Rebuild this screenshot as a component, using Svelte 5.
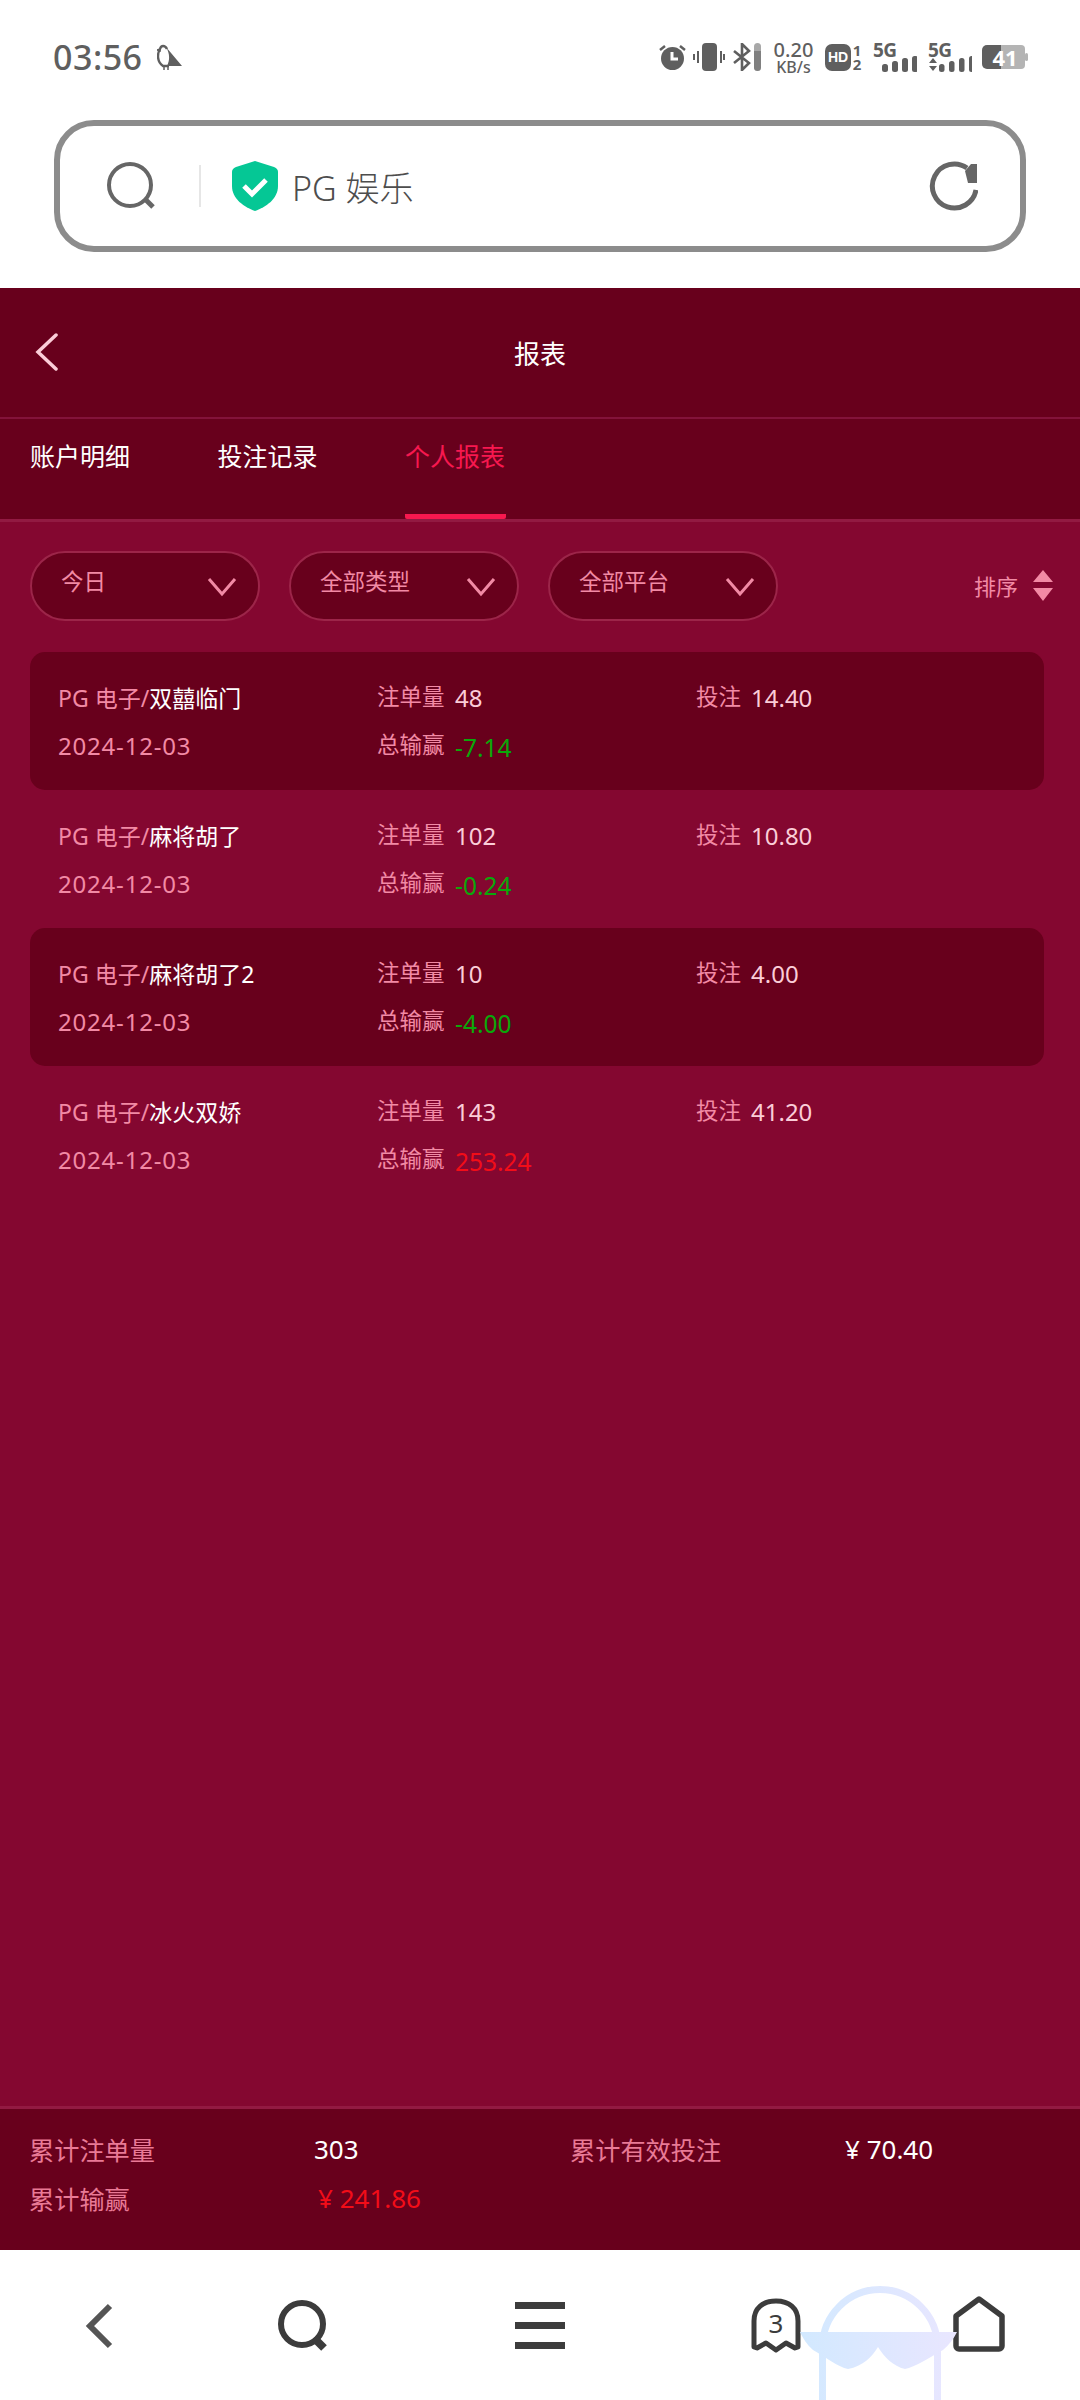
<script>
	let rows = [
		{ name: "双囍临门", count: "48", bet: "14.40", win: "-7.14", up: false },
		{ name: "麻将胡了", count: "102", bet: "10.80", win: "-0.24", up: false },
		{ name: "麻将胡了2", count: "10", bet: "4.00", win: "-4.00", up: false },
		{ name: "冰火双娇", count: "143", bet: "41.20", win: "253.24", up: true },
	]
	let tabs = ["账户明细", "投注记录", "个人报表"]
	let filters = ["今日", "全部类型", "全部平台"]
	let bars = [[0, 8], [10, 11], [20, 14], [30, 16]]
</script>

<div class="page">
	<div class="status">
		<span class="time">03:56</span>
		<svg class="bird" width="25" height="27" viewBox="0 0 25 27">
			<path d="M10 5C8 1 4 1 3 5 0 10 0 18 6 22h6" fill="none" stroke="#5f5f5f" stroke-width="2.4"/>
			<path d="M9 3l16 19H10c3-6 3-12-1-19z" fill="#5f5f5f"/>
			<path d="M3 5L0 6l3 1zM7 22v4M11 22v4" stroke="#5f5f5f" stroke-width="1.5" fill="#5f5f5f"/>
		</svg>
		<div class="status-right">
			<svg class="s-alarm" width="27" height="26" viewBox="0 0 27 26">
				<circle cx="13.5" cy="14.5" r="11.5" fill="#5f5f5f"/>
				<path d="M13 8v7h6" fill="none" stroke="#fff" stroke-width="3"/>
				<path d="M1 6l5-4M26 6l-5-4" stroke="#5f5f5f" stroke-width="2.5"/>
			</svg>
			<svg class="s-vib" width="32" height="28" viewBox="0 0 32 28">
				<rect x="9" y="0" width="15" height="28" rx="4" fill="#5f5f5f"/>
				<path d="M5 8v12M1 11v6M28 8v12M31 11v6" stroke="#5f5f5f" stroke-width="2"/>
			</svg>
			<svg class="s-bt" width="29" height="28" viewBox="0 0 29 28">
				<path d="M1 8l15 12-7 7V1l7 7L1 20" fill="none" stroke="#5f5f5f" stroke-width="2.6"/>
				<rect x="21" y="0" width="7" height="28" rx="3.5" fill="#a8a8a8"/>
				<path d="M21 8h7v16.5a3.5 3.5 0 0 1-7 0z" fill="#5f5f5f" opacity=".55"/>
			</svg>
			<div class="speed"><span>0.20</span><span class="kb">KB/s</span></div>
			<div class="hd">
				<span class="hd-box">HD</span>
				<span class="hd-n"><span>1</span><span>2</span></span>
			</div>
			<div class="net">
				<span>5G</span>
				<svg width="44" height="30" viewBox="0 0 44 30">
					{#each bars as b}
						<rect x={b[0] + 9} y={30 - b[1]} width="6" height={b[1]} rx="2.5" fill="#5f5f5f"/>
					{/each}
				</svg>
			</div>
			<div class="net">
				<span>5G</span>
				<svg width="44" height="30" viewBox="0 0 44 30">
					<path d="M1 21l4-5 4 5zM1 24h8l-4 5z" fill="#5f5f5f"/>
					{#each bars as b}
						<rect x={b[0] + 11} y={30 - b[1]} width="5.5" height={b[1]} rx="2.5" fill="#5f5f5f"/>
					{/each}
				</svg>
			</div>
			<div class="batt">
				<svg width="47" height="26" viewBox="0 0 47 26">
					<path d="M6 1h14v24H6a5 5 0 0 1-5-5V6a5 5 0 0 1 5-5z" fill="#5f5f5f"/>
					<path d="M20 1h20a4 4 0 0 1 4 4v16a4 4 0 0 1-4 4H20z" fill="#b4b4b4"/>
					<rect x="44" y="9" width="3" height="8" rx="1.5" fill="#b4b4b4"/>
				</svg>
				<span>41</span>
			</div>
		</div>
	</div>

	<div class="search-wrap">
		<div class="search">
			<svg width="48" height="48" viewBox="0 0 48 48">
				<circle cx="23" cy="23" r="21" fill="none" stroke="#666" stroke-width="4"/>
				<path d="M38 37l8 8" stroke="#666" stroke-width="5"/>
			</svg>
			<i class="sep"></i>
			<svg class="shield" width="46" height="50" viewBox="0 0 46 50">
				<path d="M23 0l19 6c3 1 4 3 4 5v14c0 13-12 21-23 25C12 46 0 38 0 25V11c0-2 1-4 4-5z" fill="#05c795"/>
				<path d="M12 25l8 8 14-14" fill="none" stroke="#fff" stroke-width="5"/>
			</svg>
			<span class="site">PG 娱乐</span>
			<svg class="refresh" width="50" height="50" viewBox="0 0 50 50">
				<path d="M48 29A22 22 0 1 1 39 7" fill="none" stroke="#666" stroke-width="5"/>
				<path d="M43 3h6v19h-9l-3-12z" fill="#666"/>
			</svg>
		</div>
	</div>

	<header>
		<svg width="24" height="38" viewBox="0 0 24 38">
			<path d="M21 2L3 19l18 17" fill="none" stroke="#fbcdd8" stroke-width="3.5" stroke-linecap="round"/>
		</svg>
		<span class="title">报表</span>
	</header>

	<nav>
		{#each tabs as tab, i}
			<div class="tab" class:active={i == 2}>{tab}</div>
		{/each}
	</nav>

	<main>
		<div class="filters">
			{#each filters as f}
				<div class="pill">
					<span>{f}</span>
					<svg width="30" height="20" viewBox="0 0 30 20">
						<path d="M2 2l13 15L28 2" fill="none" stroke="#f28aa5" stroke-width="3"/>
					</svg>
				</div>
			{/each}
			<div class="sort">
				<span>排序</span>
				<svg width="20" height="31" viewBox="0 0 20 31">
					<path d="M10 0l10 12H0zM0 18h20L10 31z" fill="#f28aa5"/>
				</svg>
			</div>
		</div>

		<div class="list">
			{#each rows as r, i}
				<div class="row" class:dark={i % 2 == 0}>
					<div class="col">
						<div class="line name"><span class="label">PG 电子/</span><span class="game">{r.name}</span></div>
						<div class="line date">2024-12-03</div>
					</div>
					<div class="col">
						<div class="line"><span class="label lw">注单量</span><span class="val">{r.count}</span></div>
						<div class="line"><span class="label lw">总输赢</span><span class="val win" class:up={r.up}>{r.win}</span></div>
					</div>
					<div class="col">
						<div class="line"><span class="label lb">投注</span><span class="val">{r.bet}</span></div>
					</div>
				</div>
			{/each}
		</div>
	</main>

	<footer>
		<span class="f-label">累计注单量</span>
		<span class="f-val">303</span>
		<span class="f-label">累计有效投注</span>
		<span class="f-val">¥ 70.40</span>
		<span class="f-label">累计输赢</span>
		<span class="f-val red">¥ 241.86</span>
	</footer>

	<div class="bottom">
		<svg class="b1" width="28" height="46" viewBox="0 0 28 46">
			<path d="M25 3L5 23l20 20" fill="none" stroke="#555" stroke-width="6"/>
		</svg>
		<svg class="b2" width="50" height="51" viewBox="0 0 50 51">
			<circle cx="24" cy="24" r="21" fill="none" stroke="#3c3c3c" stroke-width="6"/>
			<path d="M36 38l10 10" stroke="#3c3c3c" stroke-width="8"/>
		</svg>
		<div class="b3"><i></i><i></i><i></i></div>
		<div class="ghost">
			<svg width="50" height="55" viewBox="0 0 50 55">
				<path d="M3 49V23C3 10 12 3 25 3s22 7 22 20v26l-3 1-9-5-10 7-10-7-9 5z" fill="none" stroke="#3c3c3c" stroke-width="5" stroke-linejoin="round"/>
			</svg>
			<span>3</span>
		</div>
		<svg class="b5" width="52" height="56" viewBox="0 0 52 56">
			<path d="M26 3l23 17v30a3 3 0 0 1-3 3H6a3 3 0 0 1-3-3V20z" fill="none" stroke="#3c3c3c" stroke-width="5.5" stroke-linejoin="round"/>
		</svg>
	</div>

	<svg class="mascot" width="157" height="115" viewBox="0 0 157 115">
		<defs>
			<linearGradient id="ghostfill" gradientUnits="userSpaceOnUse" x1="0" y1="0" x2="157" y2="0">
				<stop offset="0" stop-color="#d2e9ff"/>
				<stop offset="1" stop-color="#e9e6ff"/>
			</linearGradient>
		</defs>
		<path d="M22.5 115V62a57.5 57.5 0 0 1 115 0v53" fill="none" stroke="url(#ghostfill)" stroke-width="7"/>
		<path d="M0 47h157c-3 6-8 13-14 18-14 8-28 17-38 19-12-3-20-11-27-22-7 11-15 19-30 22-10-2-21-11-35-19C7 60 3 53 0 47z" fill="url(#ghostfill)"/>
	</svg>
</div>

<style>
	:global(body) {
		margin: 0;
		background: #fff;
	}
	.page {
		position: relative;
		width: 1080px;
		height: 2400px;
		overflow: hidden;
		display: flex;
		flex-direction: column;
		font-family: "Noto Sans", "Noto Sans CJK SC", sans-serif;
		color: #fff;
	}
	.status {
		height: 114px;
		flex: none;
		display: flex;
		align-items: center;
		padding: 0 52px 0 53px;
		color: #5f5f5f;
	}
	.time {
		font-size: 34px;
		font-weight: 500;
		letter-spacing: 0.5px;
	}
	.bird {
		margin-left: 14px;
	}
	.status-right {
		margin-left: auto;
		display: flex;
		align-items: center;
	}
	.s-vib {
		margin-left: 7px;
	}
	.s-bt {
		margin-left: 8px;
	}
	.speed {
		display: flex;
		flex-direction: column;
		align-items: center;
		width: 41px;
		margin: 0 11px 0 11px;
		font-size: 20px;
		line-height: 17px;
		font-weight: 500;
	}
	.speed .kb {
		font-size: 16px;
		line-height: 14px;
		margin-top: 2px;
	}
	.hd {
		display: flex;
		align-items: center;
		width: 38px;
		margin-right: 10px;
	}
	.hd-box {
		width: 26px;
		height: 27px;
		border-radius: 7px;
		background: #5f5f5f;
		color: #fff;
		font: 700 14px/27px "Liberation Sans", sans-serif;
		text-align: center;
	}
	.hd-n {
		display: flex;
		flex-direction: column;
		align-items: center;
		width: 12px;
		font-size: 15px;
		line-height: 14px;
		font-weight: 700;
	}
	.net {
		position: relative;
		width: 44px;
		height: 30px;
		margin-right: 11px;
	}
	.net span {
		position: absolute;
		left: 0;
		top: -1px;
		font: 700 19px/18px "Noto Sans", sans-serif;
		letter-spacing: -0.5px;
	}
	.net svg {
		display: block;
	}
	.batt {
		position: relative;
		width: 47px;
		height: 26px;
		margin-left: -2px;
	}
	.batt svg {
		display: block;
	}
	.batt span {
		position: absolute;
		left: 10px;
		top: 0;
		width: 28px;
		text-align: center;
		font-size: 22px;
		line-height: 26px;
		font-weight: 700;
		color: #fff;
	}
	.search-wrap {
		height: 174px;
		flex: none;
		box-sizing: border-box;
		padding: 6px 54px 0 54px;
	}
	.search {
		height: 132px;
		box-sizing: border-box;
		border: 6px solid #8c8c8c;
		border-radius: 40px;
		display: flex;
		align-items: center;
		padding: 0 42px 0 47px;
	}
	.sep {
		width: 2px;
		height: 42px;
		background: #e6e6e6;
		margin-left: 44px;
	}
	.shield {
		margin-left: 31px;
	}
	.site {
		margin-left: 14px;
		font-size: 34px;
		font-weight: 300;
		color: #4d4d4d;
	}
	.refresh {
		margin-left: auto;
	}
	header {
		height: 129px;
		flex: none;
		background: #68001c;
		border-bottom: 2px solid #83133a;
		display: flex;
		align-items: center;
		justify-content: center;
		position: relative;
	}
	header svg {
		position: absolute;
		left: 35px;
		top: 45px;
	}
	.title {
		font-size: 26px;
	}
	nav {
		height: 100px;
		flex: none;
		background: #68001c;
		border-bottom: 3px solid #921a42;
		display: flex;
		gap: 86.5px;
		padding-left: 30px;
	}
	.tab {
		width: 101px;
		height: 100px;
		box-sizing: border-box;
		padding-top: 17px;
		line-height: 40px;
		font-size: 25px;
		white-space: nowrap;
	}
	.tab.active {
		color: #f7184f;
		border-bottom: 5px solid #f7184f;
		border-radius: 0 0 2px 2px;
	}
	main {
		flex: 1;
		background: #840730;
		padding: 29px 36px 0 30px;
	}
	.filters {
		display: flex;
		align-items: center;
		gap: 29px;
		height: 70px;
	}
	.pill {
		width: 230px;
		height: 70px;
		box-sizing: border-box;
		border: 2px solid #9c2549;
		border-radius: 35px;
		background: #68001c;
		display: flex;
		align-items: center;
		justify-content: space-between;
		padding: 0 21px 0 29px;
		color: #f28aa5;
		font-size: 22.5px;
	}
	.pill span {
		padding-bottom: 12px;
	}
	.pill svg {
		margin-top: 2px;
	}
	.sort {
		margin-left: auto;
		margin-right: -9px;
		display: flex;
		align-items: center;
		gap: 15px;
		color: #f28aa5;
		font-size: 22px;
		padding-bottom: 2px;
	}
	.list {
		margin-top: 31px;
		width: 1014px;
	}
	.row {
		height: 138px;
		box-sizing: border-box;
		padding: 22px 0 0 28px;
		display: grid;
		grid-template-columns: 319px 319px 1fr;
		border-radius: 15px;
	}
	.row.dark {
		background: #68001c;
	}
	.line {
		height: 47px;
		box-sizing: border-box;
		display: flex;
		align-items: center;
		font-size: 22.5px;
		white-space: nowrap;
	}
	.line + .line {
		padding-top: 2px;
	}
	.line.name {
		font-size: 23px;
		padding-bottom: 2px;
	}
	.label {
		color: #f28aa5;
	}
	.lw {
		width: 78px;
		flex: none;
		padding-bottom: 4px;
	}
	.lb {
		width: 55px;
		flex: none;
		padding-bottom: 4px;
	}
	.game {
		color: #fff;
	}
	.date {
		color: #f28aa5;
		font-size: 24px;
		letter-spacing: 0.8px;
	}
	.val {
		font-size: 24px;
		color: #fbcdd8;
	}
	.val.win {
		color: #0aa80a;
		padding-top: 4px;
		font-size: 24.5px;
	}
	.val.win.up {
		color: #f20d18;
	}
	footer {
		height: 144px;
		flex: none;
		box-sizing: border-box;
		background: #68001c;
		border-top: 3px solid #921a42;
		display: grid;
		grid-template-columns: 285px 256px 275px 1fr;
		grid-auto-rows: 49px;
		padding: 15px 0 0 29px;
		align-items: center;
		font-size: 25.2px;
	}
	.f-label {
		color: #e97a96;
		white-space: nowrap;
	}
	.f-val {
		color: #fff;
		font-size: 26px;
	}
	.f-val.red {
		color: #f20d18;
		padding-left: 4px;
	}
	.bottom {
		height: 150px;
		flex: none;
		background: #fff;
		position: relative;
		display: flex;
		align-items: flex-start;
	}
	.b1 {
		margin: 53px 0 0 85px;
	}
	.b2 {
		margin: 50px 0 0 165px;
	}
	.b3 {
		margin: 52px 0 0 187px;
		width: 50px;
		height: 47px;
		display: flex;
		flex-direction: column;
		justify-content: space-between;
	}
	.b3 i {
		display: block;
		height: 7px;
		background: #3c3c3c;
	}
	.ghost {
		margin: 48px 0 0 186px;
		width: 50px;
		height: 55px;
		position: relative;
		color: #3c3c3c;
		font-size: 26px;
		text-align: center;
		line-height: 50px;
	}
	.ghost svg {
		position: absolute;
		left: 0;
		top: 0;
	}
	.ghost span {
		position: relative;
	}
	.b5 {
		margin: 46px 0 0 152px;
	}
	.mascot {
		position: absolute;
		left: 800px;
		top: 2285px;
	}
</style>
